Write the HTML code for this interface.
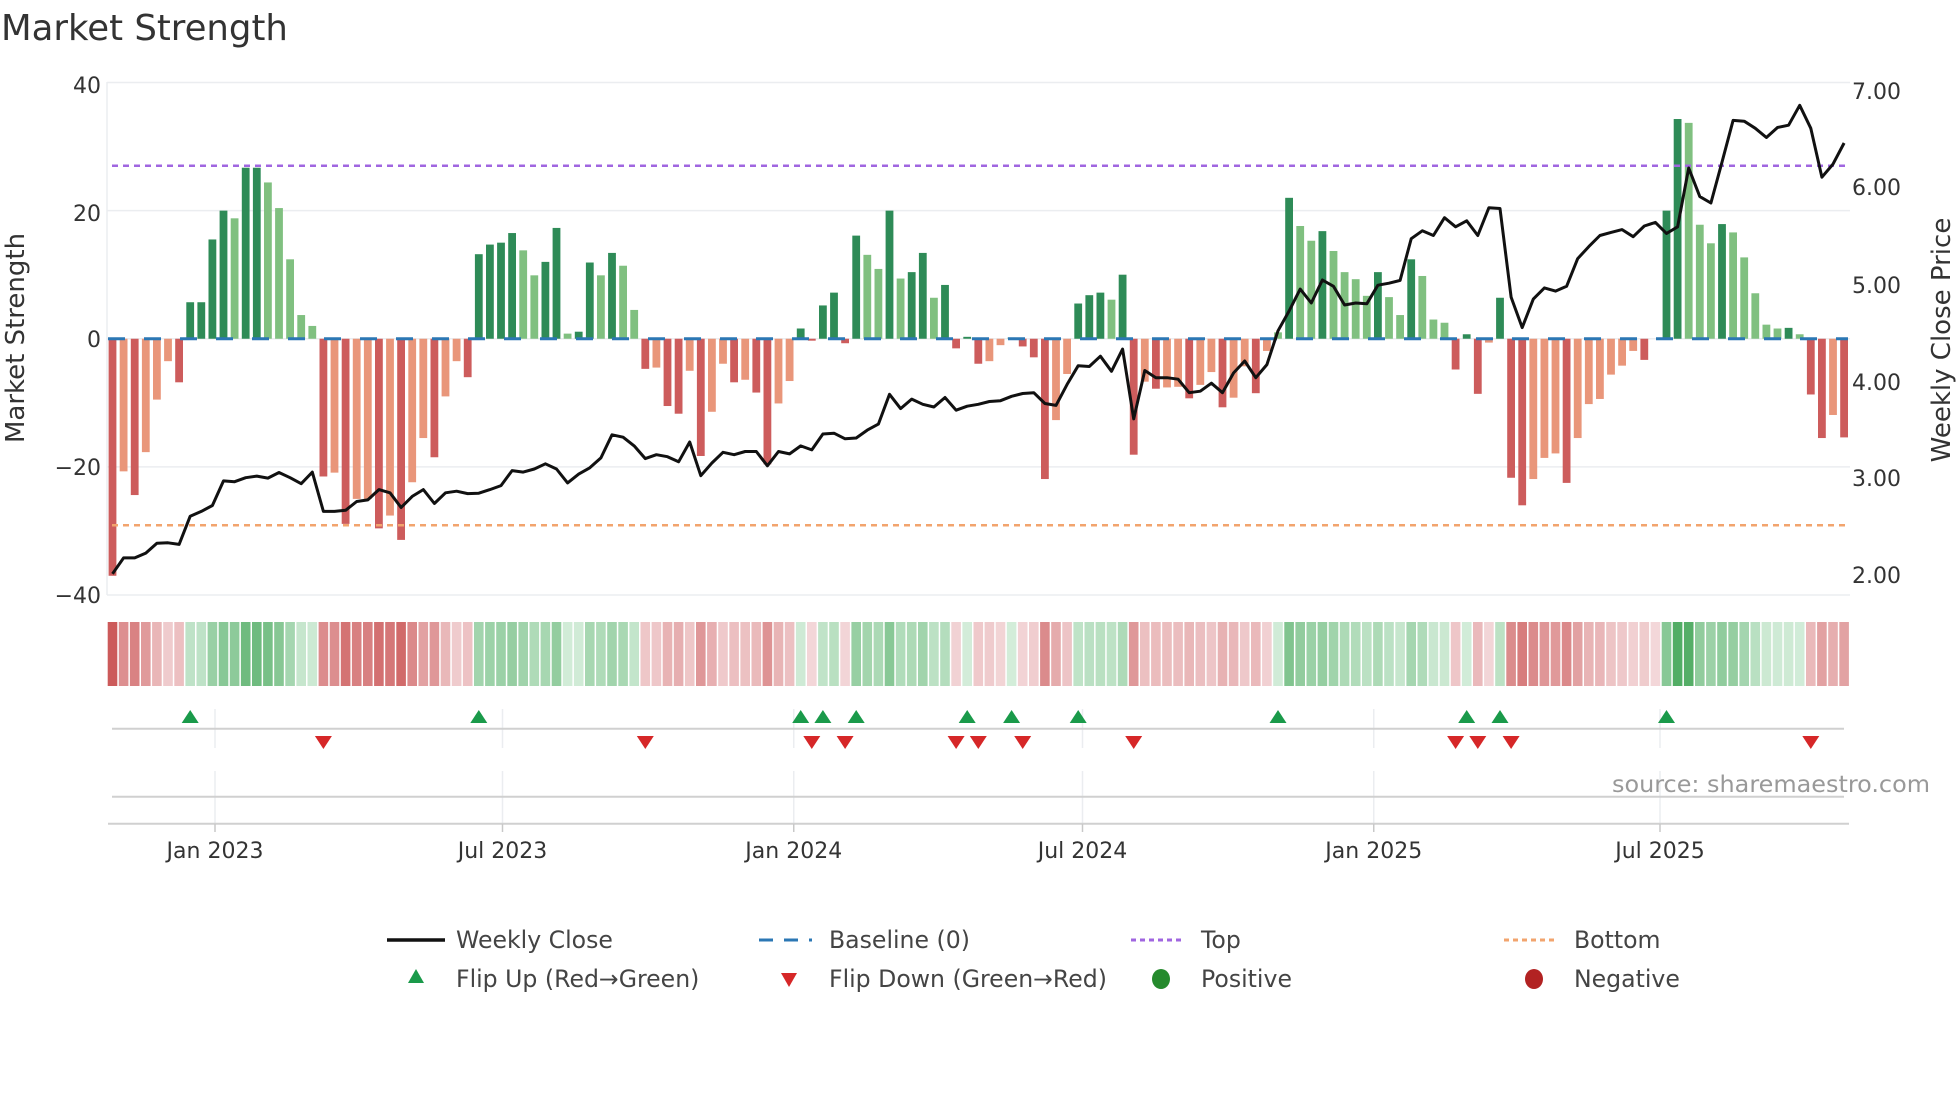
<!DOCTYPE html>
<html><head><meta charset="utf-8"><style>
html,body{margin:0;padding:0;background:#fff;}
svg{display:block;font-family:"DejaVu Sans","Liberation Sans",sans-serif;}
</style></head><body>
<svg id="c" width="1960" height="1102" viewBox="0 0 1960 1102" xmlns="http://www.w3.org/2000/svg">
<rect width="1960" height="1102" fill="#fff"/>
<text x="1" y="40" font-size="35.5" fill="#333">Market Strength</text>
<g stroke="#ebedf0" stroke-width="1.5">
<line x1="107" y1="82.5" x2="1850" y2="82.5"/>
<line x1="107" y1="210.6" x2="1850" y2="210.6"/>
<line x1="107" y1="338.75" x2="1850" y2="338.75"/>
<line x1="107" y1="466.9" x2="1850" y2="466.9"/>
<line x1="107" y1="595" x2="1850" y2="595"/>
<line x1="107" y1="82" x2="107" y2="595"/>
</g>
<g font-size="22" fill="#333" text-anchor="end">
<text x="101" y="93">40</text>
<text x="101" y="221">20</text>
<text x="101" y="347">0</text>
<text x="101" y="475">−20</text>
<text x="101" y="603">−40</text>
</g>
<g font-size="22" fill="#333">
<text x="1852" y="99">7.00</text>
<text x="1852" y="195">6.00</text>
<text x="1852" y="293">5.00</text>
<text x="1852" y="390">4.00</text>
<text x="1852" y="486">3.00</text>
<text x="1852" y="583">2.00</text>
</g>
<text transform="translate(24,338) rotate(-90)" font-size="26" fill="#333" text-anchor="middle">Market Strength</text>
<text transform="translate(1950,340) rotate(-90)" font-size="26" fill="#333" text-anchor="middle">Weekly Close Price</text>
<g id="bars"></g>
<g id="heat"></g>
<line x1="112" y1="165.8" x2="1846" y2="165.8" stroke="#a066e0" stroke-width="2.5" stroke-dasharray="6 5"/>
<line x1="112" y1="525.2" x2="1846" y2="525.2" stroke="#f2a46e" stroke-width="2.5" stroke-dasharray="6 5"/>
<line x1="108" y1="338.75" x2="1848" y2="338.75" stroke="#2b77b4" stroke-width="3" stroke-dasharray="17 19"/>
<polyline id="price" fill="none" stroke="#111" stroke-width="3" stroke-linejoin="round"/>
<g stroke="#ebedf0" stroke-width="1.5">
<line x1="215" y1="709" x2="215" y2="748"/><line x1="215" y1="771" x2="215" y2="824"/>
<line x1="502.5" y1="709" x2="502.5" y2="748"/><line x1="502.5" y1="771" x2="502.5" y2="824"/>
<line x1="793.75" y1="709" x2="793.75" y2="748"/><line x1="793.75" y1="771" x2="793.75" y2="824"/>
<line x1="1082.5" y1="709" x2="1082.5" y2="748"/><line x1="1082.5" y1="771" x2="1082.5" y2="824"/>
<line x1="1373.75" y1="709" x2="1373.75" y2="748"/><line x1="1373.75" y1="771" x2="1373.75" y2="824"/>
<line x1="1660" y1="709" x2="1660" y2="748"/><line x1="1660" y1="771" x2="1660" y2="824"/>
</g>
<line x1="112" y1="728.8" x2="1844" y2="728.8" stroke="#d0d0d0" stroke-width="2"/>
<line x1="112" y1="796.8" x2="1844" y2="796.8" stroke="#d0d0d0" stroke-width="2"/>
<line x1="108" y1="823.8" x2="1849" y2="823.8" stroke="#d0d0d0" stroke-width="2"/>
<g stroke="#c8c8c8" stroke-width="1.5">
<line x1="215" y1="824" x2="215" y2="832"/><line x1="502.5" y1="824" x2="502.5" y2="832"/>
<line x1="793.75" y1="824" x2="793.75" y2="832"/><line x1="1082.5" y1="824" x2="1082.5" y2="832"/>
<line x1="1373.75" y1="824" x2="1373.75" y2="832"/><line x1="1660" y1="824" x2="1660" y2="832"/>
</g>
<g id="marks"></g>
<g font-size="22" fill="#333" text-anchor="middle">
<text x="215" y="858">Jan 2023</text>
<text x="502.5" y="858">Jul 2023</text>
<text x="793.75" y="858">Jan 2024</text>
<text x="1082.5" y="858">Jul 2024</text>
<text x="1373.75" y="858">Jan 2025</text>
<text x="1660" y="858">Jul 2025</text>
</g>
<text x="1612" y="792" font-size="23.5" fill="#999" textLength="318" lengthAdjust="spacingAndGlyphs">source: sharemaestro.com</text>
<g font-size="23.6" fill="#444">
<line x1="387" y1="940" x2="445" y2="940" stroke="#111" stroke-width="3.5"/>
<text x="456" y="948">Weekly Close</text>
<line x1="759" y1="940" x2="812" y2="940" stroke="#2b77b4" stroke-width="3" stroke-dasharray="14 11"/>
<text x="829" y="948">Baseline (0)</text>
<line x1="1131" y1="940" x2="1185" y2="940" stroke="#a066e0" stroke-width="3" stroke-dasharray="5 4"/>
<text x="1201" y="948">Top</text>
<line x1="1504" y1="940" x2="1558" y2="940" stroke="#f2a46e" stroke-width="3" stroke-dasharray="5 4"/>
<text x="1574" y="948">Bottom</text>
<polygon points="416,969 424,983 408,983" fill="#1a9a4a"/>
<text x="456" y="987">Flip Up (Red→Green)</text>
<polygon points="781,973 797,973 789,987" fill="#d62728"/>
<text x="829" y="987">Flip Down (Green→Red)</text>
<ellipse cx="1161" cy="979" rx="9" ry="10" fill="#258a2d"/>
<text x="1201" y="987">Positive</text>
<ellipse cx="1534" cy="979" rx="9" ry="10" fill="#b22222"/>
<text x="1574" y="987">Negative</text>
</g>
</svg>
<script>
(function(){
var NS="http://www.w3.org/2000/svg";
var B="-37d -20.7l -24.4d -17.7l -9.5l -3.5l -6.8d 5.7d 5.7d 15.5d 20d 18.8l 26.7d 26.7d 24.4l 20.4l 12.4l 3.7l 2l -21.5d -20.9l -28.9d -25l -25l -29.6d -27.6l -31.4d -22.4l -15.5l -18.5d -9l -3.5l -6d 13.2d 14.7d 15d 16.5d 13.8l 9.9l 12d 17.3d 0.8l 1.1d 11.9d 9.9l 13.4d 11.4l 4.5l -4.7d -4.5l -10.5d -11.7d -5l -18.3d -11.4l -3.9l -6.8d -6.4l -8.4d -19.6d -10.1l -6.6l 1.6d -0.3d 5.2d 7.2d -0.7d 16.1d 13.1l 10.9l 20d 9.4l 10.4d 13.4d 6.4l 8.4d -1.5d 0.3d -3.9d -3.5l -1l 0.2d -1.2d -2.9d -21.9d -12.7l -5.5l 5.5d 6.8d 7.2d 6.1l 10d -18.1d -6.7l -7.8d -7.6l -7.5l -9.3d -7.2l -5.2l -10.7d -9.2l -4.3l -8.5d -1.9l 1l 22d 17.6l 15.3l 16.8d 13.7l 10.4l 9.3l 6.7l 10.4d 6.5l 3.7l 12.4d 9.8l 3l 2.5l -4.8d 0.7d -8.6d -0.6l 6.4d -21.7d -26d -21.9l -18.6l -17.9l -22.5d -15.5l -10.2l -9.4l -5.6l -4.2l -1.9l -3.3d 0d 20d 34.3d 33.7l 17.8l 14.9l 17.9d 16.6l 12.7l 7.1l 2.2l 1.6l 1.7d 0.7l -8.7d -15.5d -11.9l -15.4d".split(" ");
var P=[1272,1232,1232,1220,1195,1194,1198,1127,1115,1100,1038,1040,1030,1026,1031,1017,1030,1045,1016,1115,1115,1112,1090,1086,1060,1068,1105,1077,1060,1095,1068,1064,1070,1069,1060,1050,1012,1016,1008,995,1008,1043,1021,1005,980,922,928,950,982,972,977,990,940,1025,
993,966,972,964,964,1000,964,970,950,960,920,918,932,930,910,895,820,856,832,845,852,828,860,850,845,838,836,825,818,816,843,848,795,748,750,724,762,706,882,760,778,778,782,816,812,792,816,766,736,778,745,660,610,
555,590,532,548,595,590,592,545,540,533,428,408,420,375,398,383,420,350,352,575,652,580,552,560,548,478,448,420,412,405,423,396,387,415,398,250,322,338,235,130,132,150,173,148,142,92,150,273,240,187];
var X0=112.5,DX=11.1,Z=338.75,U=6.406;
var bars=document.getElementById("bars"),heat=document.getElementById("heat");
function mix(a,b,t){return "rgb("+[0,1,2].map(function(i){return Math.round(a[i]+(b[i]-a[i])*t)}).join(",")+")";}
var pts=[];
for(var i=0;i<B.length;i++){
 var s=B[i],v=parseFloat(s),d=s.slice(-1)=="d",x=X0+i*DX;
 if(v!==0){
  var h=Math.abs(v)*U,y=v>0?Z-h:Z;
  var r=document.createElementNS(NS,"rect");
  r.setAttribute("x",x-3.9);r.setAttribute("y",y);r.setAttribute("width",7.8);r.setAttribute("height",h);
  r.setAttribute("fill",v>0?(d?"#2e8b57":"#80c080"):(d?"#cd5c5c":"#e9967a"));
  bars.appendChild(r);
 }
 var t=Math.min(Math.abs(v)/36,1);
 var c=v>0?mix([212,237,218],[76,170,95],t):mix([243,215,217],[204,90,90],t);
 var q=document.createElementNS(NS,"rect");
 q.setAttribute("x",x-4.8);q.setAttribute("y",622);q.setAttribute("width",9.6);q.setAttribute("height",64);q.setAttribute("fill",c);
 heat.appendChild(q);
 pts.push(x.toFixed(1)+","+(Z+(P[i]-680)*0.397).toFixed(1));
}
document.getElementById("price").setAttribute("points",pts.join(" "));
var marks=document.getElementById("marks");
[8,34,63,65,68,78,82,88,106,123,126,141].forEach(function(i){
 var x=X0+(i-1)*DX,p=document.createElementNS(NS,"polygon");
 p.setAttribute("points",x+",710 "+(x+8.5)+",723 "+(x-8.5)+",723");p.setAttribute("fill","#1a9a4a");marks.appendChild(p);});
[20,49,64,67,77,79,83,93,122,124,127,154].forEach(function(i){
 var x=X0+(i-1)*DX,p=document.createElementNS(NS,"polygon");
 p.setAttribute("points",(x-8.5)+",736 "+(x+8.5)+",736 "+x+",749");p.setAttribute("fill","#d62728");marks.appendChild(p);});
})();
</script>
</body></html>
